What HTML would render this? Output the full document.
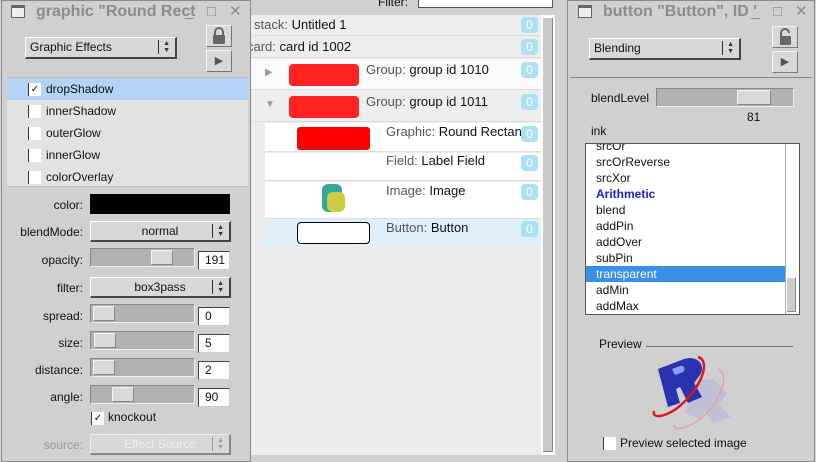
<!DOCTYPE html>
<html><head><meta charset="utf-8"><style>
*{box-sizing:border-box;margin:0;padding:0}
body{width:816px;height:462px;position:relative;overflow:hidden;background:#d6d6d6;font-family:"Liberation Sans",sans-serif;font-size:12px;color:#111}
.a{position:absolute}
.win{position:absolute;background:#d0d0d0;border:1px solid #8a8a8a}
.title{position:absolute;left:0;right:0;top:0;height:22px;color:#8c8c8c;font-weight:bold;font-size:15px;white-space:nowrap;overflow:hidden;line-height:22px}
.btn{position:absolute;background:#d8d8d8;border:1px solid #f4f4f4;border-right-color:#777;border-bottom-color:#777;text-align:center;color:#555}
.pop{position:absolute;background:#d8d8d8;border:1px solid #fff;border-right:2px solid #444;border-bottom:2px solid #444;font-size:12px;line-height:18px}
.arr{position:absolute;right:5px;top:2px;font-size:7px;line-height:7px;color:#333;border-left:1px solid #333;padding-left:4px}
.sl{position:absolute;background:#b1b1b1;border:1px solid #888;border-right-color:#eee;border-bottom-color:#eee}
.th{position:absolute;top:1px;bottom:1px;width:22px;background:#dadada;border:1px solid #f4f4f4;border-right-color:#888;border-bottom-color:#888}
.num{position:absolute;background:#fff;border:1px solid #444;border-right-color:#ccc;border-bottom-color:#ccc;font-size:12px;padding-left:6px;line-height:16px}
.lbl{position:absolute;left:0;width:81px;text-align:right;font-size:12px}
.cb{position:absolute;width:13px;height:13px;background:#fff;border-left:1px solid #333;font-size:10px;line-height:13px;text-align:center}
.row{position:absolute;left:0;width:290px}
.badge{position:absolute;left:270px;width:17px;height:16px;background:#a9e2f7;border-radius:4px;color:#fff;text-align:center;font-size:12px;line-height:16px}
.li{position:absolute;left:10px;font-size:12px;line-height:16px}
.g{color:#555}
</style></head><body>

<div class="a" style="left:250px;top:0;width:318px;height:462px;background:#d0d0d0"></div>
<div class="a" style="left:378px;top:-5px">Filter:</div>
<div class="a" style="left:418px;top:-2px;width:135px;height:10px;background:#fff;border:1px solid #555"></div>
<div class="a" style="left:250px;top:15px;width:291px;height:440px;background:#ececec;border-left:1px solid #999">
  <div class="row" style="top:0;height:21px;background:#ededed;border-bottom:1px solid #ddd"><span class="a" style="left:3px;top:2px;font-size:13px"><span class="g">stack:</span> Untitled 1</span><div class="badge" style="top:2px">0</div></div>
  <div class="row" style="top:22px;height:21px;background:#ededed;border-bottom:1px solid #ddd"><span class="a" style="left:-4px;top:2px;font-size:13px"><span class="g">card:</span> card id 1002</span><div class="badge" style="top:2px">0</div></div>
  <div class="row" style="top:44px;height:31px;background:#fafafa;border-bottom:1px solid #ddd"><span class="a" style="left:14px;top:8px;color:#999;font-size:10px">▶</span><div class="a" style="left:38px;top:5px;width:70px;height:22px;background:#f22;border-radius:4px"></div><span class="a" style="left:115px;top:3px;font-size:13px"><span class="g">Group:</span> group id 1010</span><div class="badge" style="top:3px">0</div></div>
  <div class="row" style="top:76px;height:31px;background:#eeeeee;border-bottom:1px solid #ddd"><span class="a" style="left:14px;top:8px;color:#999;font-size:10px">▼</span><div class="a" style="left:38px;top:5px;width:70px;height:22px;background:#f22;border-radius:4px"></div><span class="a" style="left:115px;top:3px;font-size:13px"><span class="g">Group:</span> group id 1011</span><div class="badge" style="top:3px">0</div></div>
  <div class="row" style="top:108px;height:29px;background:#fff;left:14px;width:276px;border-bottom:1px solid #ddd"><div class="a" style="left:32px;top:4px;width:73px;height:23px;background:#f00;border-radius:3px"></div><span class="a" style="left:121px;top:1px;font-size:13px"><span class="g">Graphic:</span> Round Rectan</span><div class="badge" style="left:256px;top:3px">0</div></div>
  <div class="row" style="top:138px;height:28px;background:#fff;left:14px;width:276px;border-bottom:1px solid #ddd"><span class="a" style="left:121px;top:0;font-size:13px"><span class="g">Field:</span> Label Field</span><div class="badge" style="left:256px;top:2px">0</div></div>
  <div class="row" style="top:167px;height:37px;background:#fff;left:14px;width:276px;border-bottom:1px solid #ddd"><div class="a" style="left:57px;top:2px;width:20px;height:28px;background:#3a9;border-radius:6px"></div><div class="a" style="left:62px;top:10px;width:18px;height:20px;background:#cc4;border-radius:6px"></div><span class="a" style="left:121px;top:1px;font-size:13px"><span class="g">Image:</span> Image</span><div class="badge" style="left:256px;top:2px">0</div></div>
  <div class="row" style="top:204px;height:27px;background:#dff0fb;left:14px;width:276px"><div class="a" style="left:32px;top:3px;width:73px;height:22px;background:#fff;border:1px solid #000;border-radius:4px"></div><span class="a" style="left:121px;top:1px;font-size:13px"><span class="g">Button:</span> Button</span><div class="badge" style="left:256px;top:2px">0</div></div>
</div>
<div class="a" style="left:541px;top:15px;width:14px;height:440px;background:#fff"></div>
<div class="a" style="left:543px;top:18px;width:10px;height:434px;background:#c8c8c8;border-right:1px solid #888;border-bottom:1px solid #888"></div>

<div class="win" style="left:1px;top:0;width:250px;height:462px">
  <div class="title"><span class="a" style="left:9px;top:4px;width:14px;height:13px;border:1px solid #666;border-top:3px solid #666;background:#eee"></span><span class="a" style="left:34px;top:0;font-size:16px">graphic "Round Rect</span><span class="a" style="left:183px;top:0;font-weight:normal">_</span><span class="a" style="left:205px;top:0;font-weight:normal">□</span><span class="a" style="left:227px;top:0;font-weight:normal">✕</span></div>
  <div class="pop" style="left:23px;top:36px;width:152px;height:22px"><span style="padding-left:4px">Graphic Effects</span><span class="arr">▲<br>▼</span></div>
  <div class="btn" style="left:204px;top:24px;width:26px;height:22px"><svg width="14" height="18" viewBox="0 0 14 18" style="margin-top:1px"><path d="M3 8V5a4 4 0 0 1 8 0v3" fill="none" stroke="#666" stroke-width="2"/><rect x="1" y="8" width="12" height="9" rx="1" fill="#666"/></svg></div>
  <div class="btn" style="left:204px;top:49px;width:26px;height:22px;font-size:11px;line-height:20px">▶</div>
  <div class="a" style="left:5px;top:76px;width:241px;height:110px;background:#e2e2e2;border-top:1px solid #bbb;border-bottom:1px solid #bbb">
    <div class="a" style="left:0;top:0;width:241px;height:22px;background:#b3d4f7"></div>
    <div class="cb" style="left:21px;top:5px">✓</div><span class="a" style="left:39px;top:4px">dropShadow</span>
    <div class="cb" style="left:21px;top:27px"></div><span class="a" style="left:39px;top:26px">innerShadow</span>
    <div class="cb" style="left:21px;top:49px"></div><span class="a" style="left:39px;top:48px">outerGlow</span>
    <div class="cb" style="left:21px;top:71px"></div><span class="a" style="left:39px;top:70px">innerGlow</span>
    <div class="cb" style="left:21px;top:93px"></div><span class="a" style="left:39px;top:92px">colorOverlay</span>
  </div>
  <span class="lbl" style="top:197px">color:</span>
  <div class="a" style="left:88px;top:193px;width:140px;height:20px;background:#000"></div>
  <span class="lbl" style="top:224px">blendMode:</span>
  <div class="pop" style="left:88px;top:220px;width:141px;height:21px;text-align:center">normal<span class="arr">▲<br>▼</span></div>
  <span class="lbl" style="top:252px">opacity:</span>
  <div class="sl" style="left:88px;top:247px;width:105px;height:19px"><div class="th" style="left:60px"></div></div>
  <div class="num" style="left:196px;top:250px;width:32px;height:19px">191</div>
  <span class="lbl" style="top:280px">filter:</span>
  <div class="pop" style="left:88px;top:276px;width:141px;height:21px;text-align:center">box3pass<span class="arr">▲<br>▼</span></div>
  <span class="lbl" style="top:308px">spread:</span>
  <div class="sl" style="left:88px;top:303px;width:105px;height:19px"><div class="th" style="left:2px"></div></div>
  <div class="num" style="left:196px;top:306px;width:32px;height:19px">0</div>
  <span class="lbl" style="top:335px">size:</span>
  <div class="sl" style="left:88px;top:330px;width:105px;height:19px"><div class="th" style="left:3px"></div></div>
  <div class="num" style="left:196px;top:333px;width:32px;height:19px">5</div>
  <span class="lbl" style="top:362px">distance:</span>
  <div class="sl" style="left:88px;top:357px;width:105px;height:19px"><div class="th" style="left:2px"></div></div>
  <div class="num" style="left:196px;top:360px;width:32px;height:19px">2</div>
  <span class="lbl" style="top:389px">angle:</span>
  <div class="sl" style="left:88px;top:384px;width:105px;height:19px"><div class="th" style="left:21px"></div></div>
  <div class="num" style="left:196px;top:387px;width:32px;height:19px">90</div>
  <div class="cb" style="left:89px;top:411px">✓</div><span class="a" style="left:106px;top:409px">knockout</span>
  <span class="lbl" style="top:437px;color:#999">source:</span>
  <div class="pop" style="left:88px;top:433px;width:141px;height:21px;text-align:center;color:#eee;border-color:#eee #888 #888 #eee">Effect Source<span class="arr" style="color:#999;border-color:#999">▲<br>▼</span></div>
</div>

<div class="win" style="left:567px;top:0;width:248px;height:462px">
  <div class="title"><span class="a" style="left:10px;top:4px;width:14px;height:13px;border:1px solid #666;border-top:3px solid #666;background:#eee"></span><span class="a" style="left:35px;top:0;font-size:16px">button "Button", ID '</span><span class="a" style="left:183px;top:0;font-weight:normal">_</span><span class="a" style="left:205px;top:0;font-weight:normal">□</span><span class="a" style="left:227px;top:0;font-weight:normal">✕</span></div>
  <div class="pop" style="left:21px;top:37px;width:152px;height:22px"><span style="padding-left:4px">Blending</span><span class="arr">▲<br>▼</span></div>
  <div class="btn" style="left:204px;top:25px;width:26px;height:22px"><svg width="14" height="18" viewBox="0 0 14 18" style="margin-top:1px"><path d="M3 8V5a4 4 0 0 1 8 0" fill="none" stroke="#666" stroke-width="2"/><rect x="2" y="8" width="11" height="9" rx="1" fill="#666"/></svg></div>
  <div class="btn" style="left:204px;top:50px;width:26px;height:22px;font-size:11px;line-height:20px">▶</div>
  <div class="a" style="left:2px;top:76px;width:242px;height:1px;background:#888"></div>
  <span class="a" style="left:23px;top:90px">blendLevel</span>
  <div class="sl" style="left:88px;top:87px;width:138px;height:19px"><div class="th" style="left:80px;width:34px"></div></div>
  <span class="a" style="left:179px;top:109px">81</span>
  <span class="a" style="left:23px;top:123px">ink</span>
  <div class="a" style="left:17px;top:142px;width:215px;height:172px;background:#fff;border:1px solid #555;overflow:hidden">
    <div class="a" style="left:0;top:122px;width:199px;height:16px;background:#3a8ee6"></div>
    <span class="li" style="top:-6px">srcOr</span>
    <span class="li" style="top:10px">srcOrReverse</span>
    <span class="li" style="top:26px">srcXor</span>
    <span class="li" style="top:42px;color:#1a1ae6;font-weight:bold">Arithmetic</span>
    <span class="li" style="top:58px">blend</span>
    <span class="li" style="top:74px">addPin</span>
    <span class="li" style="top:90px">addOver</span>
    <span class="li" style="top:106px">subPin</span>
    <span class="li" style="top:122px;color:#fff">transparent</span>
    <span class="li" style="top:138px">adMin</span>
    <span class="li" style="top:154px">addMax</span>
    <div class="a" style="left:199px;top:0;width:14px;height:170px;background:#fff;border-left:1px solid #aaa"></div>
    <div class="a" style="left:201px;top:134px;width:9px;height:34px;background:#ccc;border-right:1px solid #888;border-bottom:1px solid #888"></div>
  </div>
  <span class="a" style="left:31px;top:336px">Preview</span>
  <div class="a" style="left:78px;top:345px;width:147px;height:1px;background:#777"></div>
  <svg class="a" style="left:80px;top:350px" width="90" height="80" viewBox="0 0 90 80">
    <path d="M45 30 l20 -2 l14 14 l-8 12 l12 12 l-18 6 l-8 -12 l-6 8 l-14 -6z" fill="#b8bcd8" opacity="0.8"/>
    <path d="M10 18 l26 -10 c14 -4 22 6 16 16 l-6 8 l8 14 l-14 6 l-8 -16 l-4 2 l4 14 l-12 4z" fill="#2a32b0"/>
    <path d="M24 18 l8 -3 c4 -1 6 3 3 6 l-8 3z" fill="#8aa0ff"/>
    <path d="M50 6 c14 4 2 34 -22 52 c-12 8 -24 10 -22 2" fill="none" stroke="#d81a1a" stroke-width="2.5"/>
    <path d="M70 18 c14 6 0 40 -24 54 c-10 6 -20 8 -20 2" fill="none" stroke="#e8a0a0" stroke-width="1.5"/>
  </svg>
  <div class="cb" style="left:35px;top:436px"></div>
  <span class="a" style="left:52px;top:435px">Preview selected image</span>
</div>
</body></html>
